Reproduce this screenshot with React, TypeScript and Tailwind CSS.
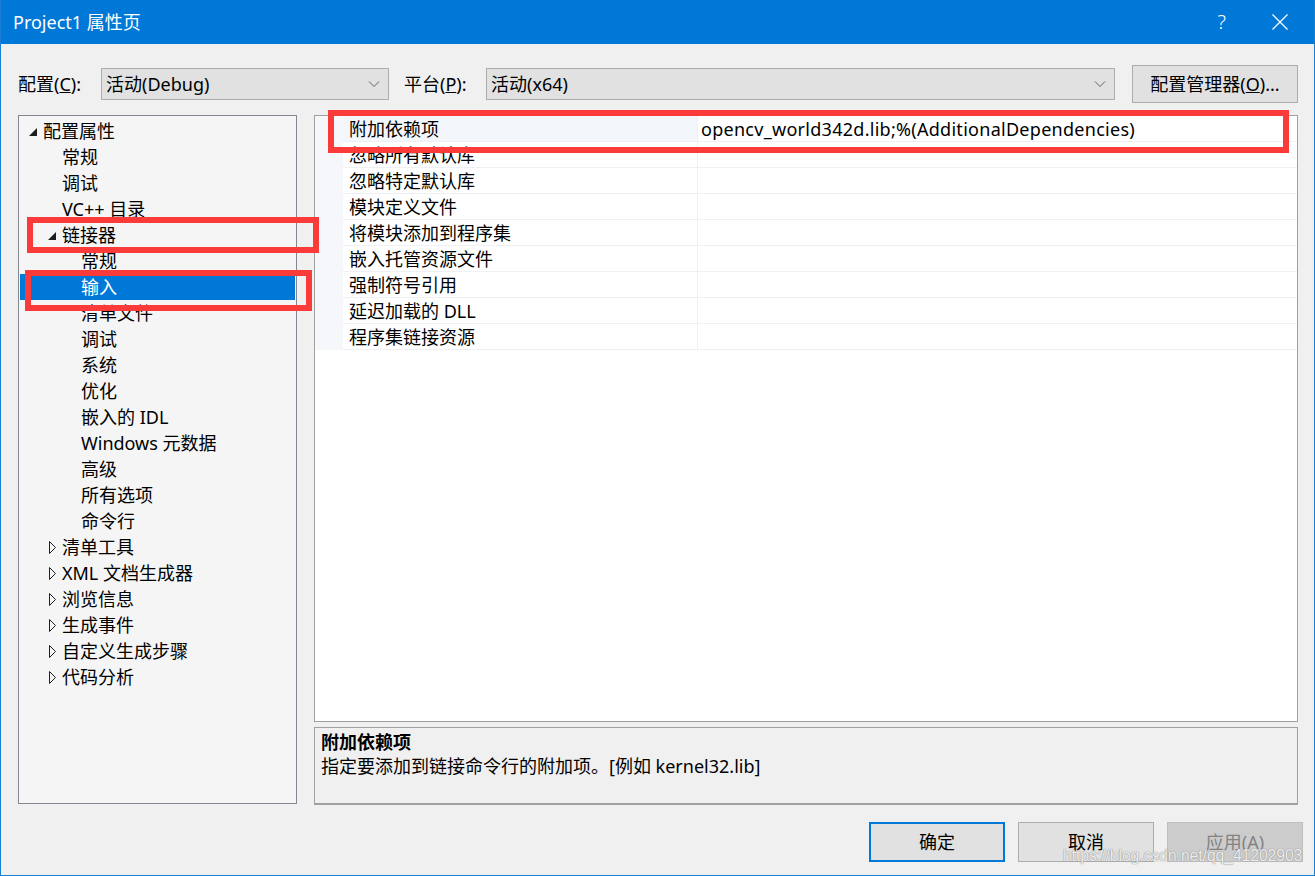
import React from 'react'

const font = { fontFamily: '"Noto Sans", "Noto Sans CJK SC", sans-serif' }

type Node = { label: string; level: 0 | 1 | 2; arrow?: 'open' | 'closed'; selected?: boolean }

const tree: Node[] = [
  { label: '配置属性', level: 0, arrow: 'open' },
  { label: '常规', level: 1 },
  { label: '调试', level: 1 },
  { label: 'VC++ 目录', level: 1 },
  { label: '链接器', level: 1, arrow: 'open' },
  { label: '常规', level: 2 },
  { label: '输入', level: 2, selected: true },
  { label: '清单文件', level: 2 },
  { label: '调试', level: 2 },
  { label: '系统', level: 2 },
  { label: '优化', level: 2 },
  { label: '嵌入的 IDL', level: 2 },
  { label: 'Windows 元数据', level: 2 },
  { label: '高级', level: 2 },
  { label: '所有选项', level: 2 },
  { label: '命令行', level: 2 },
  { label: '清单工具', level: 1, arrow: 'closed' },
  { label: 'XML 文档生成器', level: 1, arrow: 'closed' },
  { label: '浏览信息', level: 1, arrow: 'closed' },
  { label: '生成事件', level: 1, arrow: 'closed' },
  { label: '自定义生成步骤', level: 1, arrow: 'closed' },
  { label: '代码分析', level: 1, arrow: 'closed' },
]

const indent = { 0: 'pl-[7px]', 1: 'pl-[26px]', 2: 'pl-[45px]' }

const props = [
  { name: '附加依赖项', value: 'opencv_world342d.lib;%(AdditionalDependencies)' },
  { name: '忽略所有默认库', value: '' },
  { name: '忽略特定默认库', value: '' },
  { name: '模块定义文件', value: '' },
  { name: '将模块添加到程序集', value: '' },
  { name: '嵌入托管资源文件', value: '' },
  { name: '强制符号引用', value: '' },
  { name: '延迟加载的 DLL', value: '' },
  { name: '程序集链接资源', value: '' },
]

function Chevron() {
  return (
    <svg width="12" height="8" viewBox="0 0 12 8" className="ml-auto mr-[8px]">
      <polyline points="1,1.5 6,6.5 11,1.5" fill="none" stroke="#606060" strokeWidth="1" />
    </svg>
  )
}

function Arrow({ kind }: { kind?: 'open' | 'closed' }) {
  if (kind === 'open')
    return (
      <svg width="8" height="8" viewBox="0 0 8 8" className="mt-[1px] ml-[2px]">
        <polygon points="8,0 8,8 0,8" fill="#1e1e1e" />
      </svg>
    )
  if (kind === 'closed')
    return (
      <svg width="8" height="13" viewBox="0 0 8 13" className="ml-[3px]">
        <polygon points="0.5,0.5 6.5,6.5 0.5,12.5" fill="none" stroke="#1e1e1e" strokeWidth="1" />
      </svg>
    )
  return null
}

export default function App() {
  return (
    <div
      className="relative w-[1315px] h-[876px] bg-[#f0f0f0] border-x border-b border-[#1a7fd4] flex flex-col text-[18px] text-black overflow-hidden"
      style={font}
    >
      {/* title bar */}
      <div className="h-[44px] bg-[#0078d7] text-white flex items-center pl-[12px] shrink-0">
        <span className="leading-none">Project1 属性页</span>
        <span className="ml-auto mr-[46px] text-[20px] font-light">?</span>
        <svg width="16" height="16" viewBox="0 0 16 16" className="mr-[26px]">
          <path d="M0.5 0.5 L15.5 15.5 M15.5 0.5 L0.5 15.5" stroke="white" strokeWidth="1.3" />
        </svg>
      </div>

      {/* config row */}
      <div className="flex items-center h-[38px] mt-[21px] pl-[17px] pr-[16px]">
        <span className="w-[83px]">
          配置(<u>C</u>):
        </span>
        <div className="w-[288px] h-[32px] bg-[#e1e1e1] border border-[#adadad] flex items-center pl-[4px]">
          活动(Debug)
          <Chevron />
        </div>
        <span className="ml-[15px] w-[82px]">
          平台(<u>P</u>):
        </span>
        <div className="w-[629px] h-[32px] bg-[#e1e1e1] border border-[#adadad] flex items-center pl-[4px]">
          活动(x64)
          <Chevron />
        </div>
        <button className="ml-auto w-[166px] h-[38px] bg-[#e1e1e1] border border-[#adadad] flex items-center justify-center">
          配置管理器(<u>O</u>)...
        </button>
      </div>

      {/* main area */}
      <div className="flex mt-[12px] pl-[17px] pr-[16px] h-[690px]">
        <div className="w-[279px] h-[689px] bg-[#f5f5f5] border border-[#828790] pt-[2px]">
          {tree.map((n, i) => (
            <div
              key={i}
              className={`h-[26px] mx-[1px] flex items-center ${indent[n.level]} ${
                n.selected ? 'bg-[#0078d7] text-white' : ''
              }`}
            >
              <div className="w-[16px] flex items-center">
                <Arrow kind={n.arrow} />
              </div>
              <span className="whitespace-nowrap">{n.label}</span>
            </div>
          ))}
        </div>

        <div className="ml-[17px] w-[984px] flex flex-col">
          <div className="h-[607px] bg-white border border-[#a0a0a0] flex flex-col">
            {props.map((p, i) => (
              <div key={i} className="flex h-[26px]">
                <div className="w-[28px] bg-[#f5f7fa]" />
                <div
                  className={`w-[354px] pl-[6px] pt-[2px] flex items-center border-b border-[#eef0f3] ${
                    i === 0 ? 'bg-[#f3f6fb]' : ''
                  }`}
                >
                  {p.name}
                </div>
                <div className="flex-1 pl-[3px] pt-[2px] flex items-center border-l border-b border-[#eef0f3] whitespace-nowrap tracking-[0.28px]">
                  {p.value}
                </div>
              </div>
            ))}
          </div>
          <div className="mt-[5px] h-[78px] bg-[#f0f0f0] border border-b-2 border-[#a0a0a0] pl-[6px] pt-[2px] leading-[24px]">
            <div className="font-bold">附加依赖项</div>
            <div>指定要添加到链接命令行的附加项。[例如 kernel32.lib]</div>
          </div>
        </div>
      </div>

      {/* buttons */}
      <div className="flex justify-end gap-[13px] mt-[17px] pr-[11px]">
        <button className="w-[136px] h-[40px] bg-[#e1e1e1] border-2 border-[#0078d7]">确定</button>
        <button className="w-[136px] h-[40px] bg-[#e1e1e1] border border-[#adadad]">取消</button>
        <button className="w-[136px] h-[40px] bg-[#cccccc] border border-[#bfbfbf] text-[#838383]">
          应用(A)
        </button>
      </div>

      {/* annotation boxes */}
      <div className="absolute left-[26px] top-[217px] w-[292px] h-[36px] border-[6px] border-[#fb3a3a]" />
      <div className="absolute left-[24px] top-[270px] w-[287px] h-[41px] border-[6px] border-[#fb3a3a]" />
      <div className="absolute left-[327px] top-[110px] w-[961px] h-[43px] border-[6px] border-[#fb3a3a]" />

      {/* watermark */}
      <div
        className="absolute left-[1062px] top-[846px] text-[15.6px] leading-[20px] text-white/85 whitespace-nowrap"
        style={{ fontFamily: '"Liberation Sans", Arial, sans-serif', textShadow: '0 0 1px #888, 0 0 1px #888' }}
      >
        https://blog.csdn.net/qq_41202903
      </div>
    </div>
  )
}
